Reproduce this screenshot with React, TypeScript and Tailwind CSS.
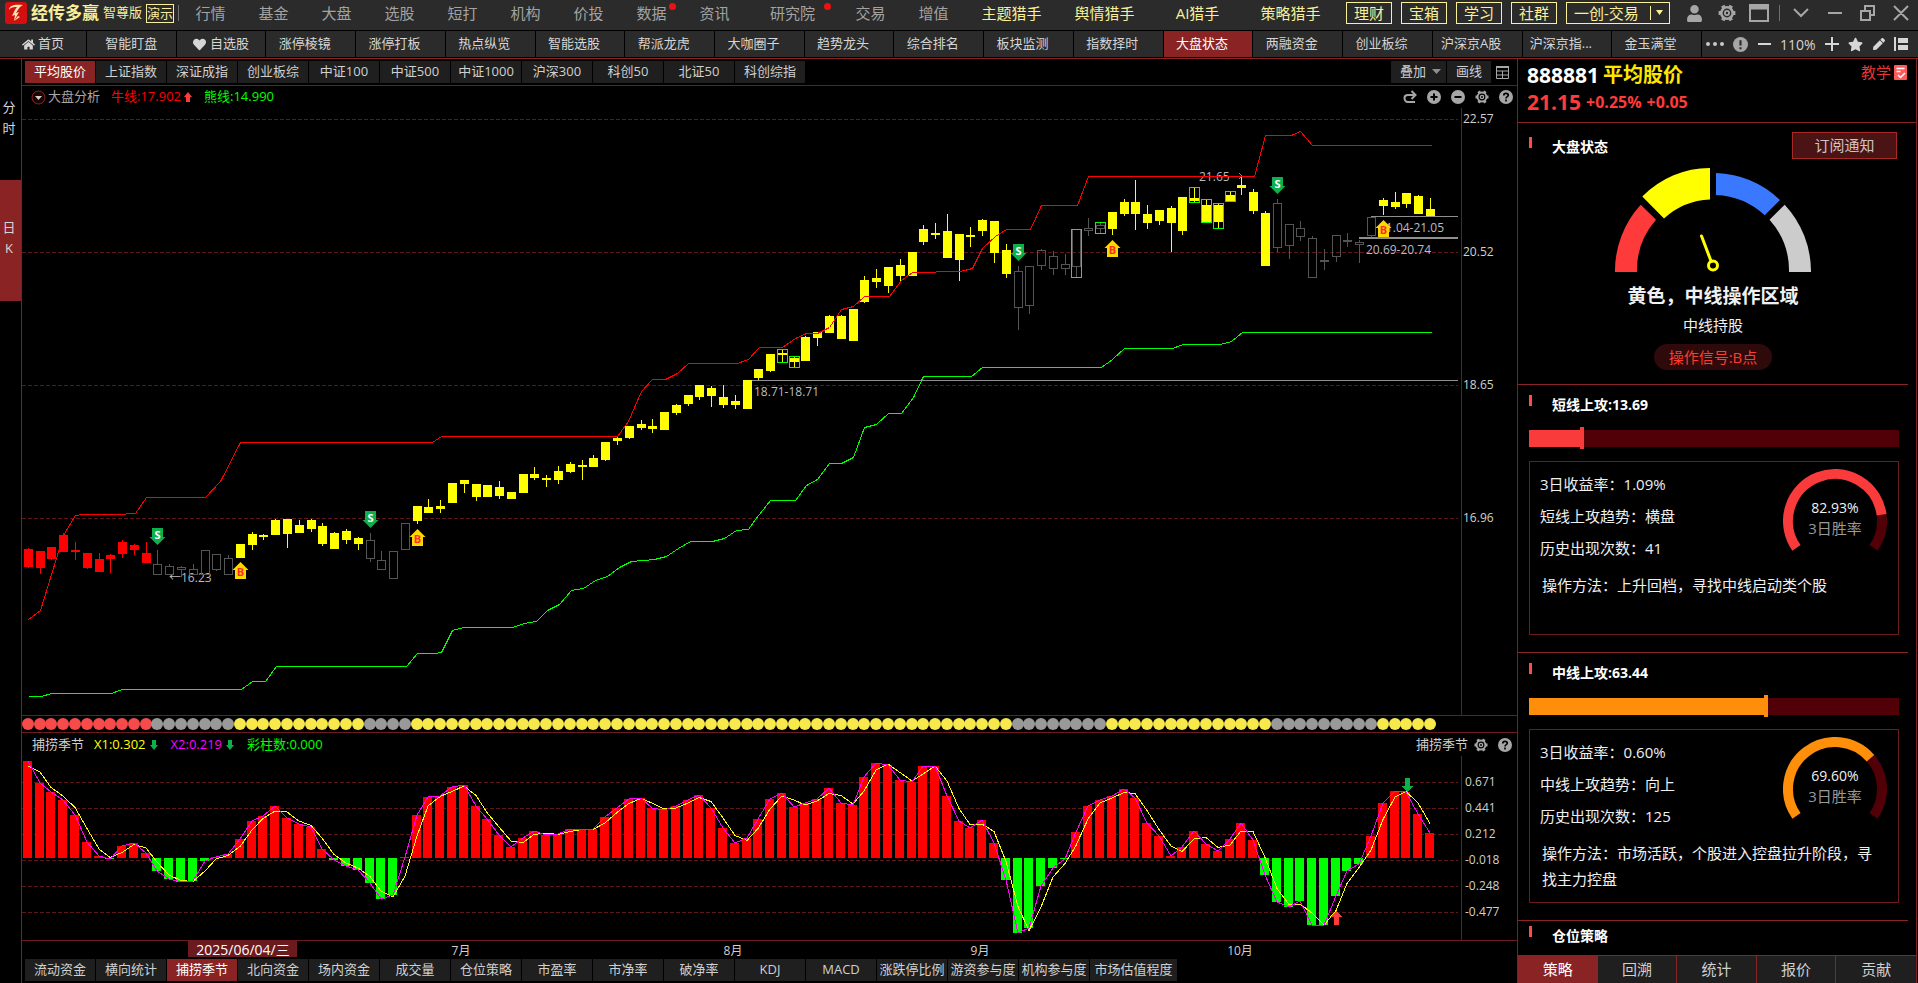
import type { ReactNode } from "react";
import { FaHeart, FaHome, FaPen, FaStar, FaUser } from "react-icons/fa";

type Tone = "red" | "gray" | "yellow";

const STEP = 11.782;
const FIRST_X = 28.35;
const ZERO_Y = 858;

// [high, body top, body bottom, low] for each trading day
const CANDLES: number[][] = [
  [548, 549, 567, 568], [551, 551, 568, 574], [547, 547, 559, 560], [533, 535, 552, 552],
  [542, 550, 552, 560], [553, 553, 568, 569], [553, 559, 572, 572], [554, 555, 559, 573],
  [540, 542, 554, 558], [544, 545, 550, 555], [542, 553, 563, 563], [550, 564, 575, 575],
  [564, 566, 575, 575], [566, 567, 570, 577], [564, 569, 575, 575], [550, 550, 575, 575],
  [554, 554, 570, 571], [555, 558, 575, 575], [544, 544, 558, 558], [532, 534, 545, 550],
  [534, 535, 537, 540], [519, 520, 535, 535], [519, 519, 534, 548], [520, 525, 533, 533],
  [519, 520, 529, 532], [523, 526, 544, 546], [532, 533, 549, 549], [529, 531, 540, 544],
  [537, 538, 544, 550], [533, 540, 559, 562], [551, 560, 570, 570], [551, 551, 579, 579],
  [523, 523, 550, 550], [506, 506, 521, 524], [499, 507, 513, 513], [500, 506, 509, 513],
  [483, 483, 503, 503], [480, 480, 484, 493], [484, 484, 497, 501], [485, 485, 497, 497],
  [481, 487, 496, 499], [492, 492, 499, 499], [474, 474, 493, 493], [467, 474, 478, 480],
  [475, 478, 480, 487], [466, 471, 480, 484], [462, 464, 472, 473], [460, 465, 467, 480],
  [455, 458, 467, 467], [442, 442, 460, 461], [436, 438, 441, 445], [426, 426, 438, 439],
  [420, 424, 428, 430], [419, 426, 429, 433], [412, 412, 430, 430], [404, 405, 413, 415],
  [395, 395, 404, 406], [385, 385, 397, 400], [386, 388, 396, 407], [385, 397, 405, 408],
  [395, 401, 405, 409], [380, 380, 409, 409], [369, 369, 378, 380], [354, 354, 371, 372],
  [350, 353, 355, 362], [356, 358, 362, 367], [336, 337, 361, 361], [332, 332, 338, 346],
  [315, 316, 333, 333], [315, 316, 339, 339], [309, 309, 341, 341], [276, 280, 302, 303],
  [269, 278, 282, 288], [267, 267, 286, 293], [259, 265, 276, 282], [252, 252, 276, 276],
  [225, 229, 242, 245], [223, 233, 235, 239], [214, 231, 258, 258], [234, 234, 260, 281],
  [227, 235, 237, 247], [219, 220, 231, 236], [221, 221, 253, 263], [244, 250, 274, 278],
  [266, 271, 308, 330], [266, 266, 306, 314], [249, 250, 266, 270], [251, 256, 269, 275],
  [254, 264, 269, 275], [229, 229, 267, 277], [218, 228, 231, 236], [222, 225, 229, 233],
  [212, 212, 229, 235], [199, 202, 214, 216], [180, 202, 214, 230], [205, 214, 223, 229],
  [210, 210, 221, 225], [206, 208, 223, 252], [197, 197, 231, 235], [187, 198, 201, 202],
  [199, 205, 222, 222], [203, 205, 222, 228], [191, 195, 201, 201], [177, 185, 188, 195],
  [189, 192, 211, 214], [211, 213, 266, 266], [199, 203, 248, 252], [224, 224, 246, 259],
  [221, 228, 237, 241], [236, 238, 278, 278], [249, 260, 262, 270], [235, 235, 257, 262],
  [233, 240, 242, 247], [240, 242, 245, 263], [217, 217, 236, 237], [198, 200, 206, 215],
  [192, 202, 207, 209], [193, 193, 204, 208], [195, 196, 214, 214], [198, 209, 216, 216],
];

const SEASON: number[] = [
  761, 783, 792, 800, 815, 842, 856, 859, 846, 843, 853, 871, 879, 882, 881, 861, 857, 854, 839, 821,
  816, 806, 818, 824, 827, 849, 860, 866, 870, 883, 899, 895, 857, 815, 797, 796, 787, 785, 806, 819,
  835, 847, 838, 831, 835, 834, 829, 830, 829, 817, 808, 799, 798, 808, 810, 806, 800, 795, 808, 828,
  843, 838, 819, 799, 793, 807, 803, 799, 788, 803, 805, 777, 763, 765, 780, 782, 766, 766, 796, 821,
  828, 820, 843, 880, 933, 928, 886, 868, 859, 832, 806, 800, 796, 789, 798, 823, 836, 856, 847, 831,
  844, 851, 839, 823, 840, 875, 902, 907, 901, 925, 925, 896, 871, 864, 836, 803, 791, 792, 814, 833,
];

const BULL_LINE =
  "28,619 40,610 63,535 75,515 82,514 117,514 135,513 146,497 205,497 220,481 240,442 432,442 441,436 617,436 628,421 641,391 652,379 665,379 677,373 688,363 737,363 748,359 759,347 782,347 795,338 806,333 817,333 829,327 841,309 853,306 864,296 889,296 901,280 912,272 960,271 972,268 982,248 995,236 1006,229 1030,229 1041,205 1077,205 1088,176 1254,176 1265,135 1291,135 1300,131 1312,145 1431,145";
const BEAR_LINE =
  "28,696 41,696 51,693 111,693 122,689 241,689 252,681 265,681 276,666 406,666 417,653 434,653 441,652 452,630 463,627 512,627 524,623 536,621 547,610 559,604 571,590 583,588 595,580 607,576 619,567 631,561 654,559 666,556 678,548 690,541 712,541 724,538 736,530 748,529 755,519 770,500 795,500 806,485 817,479 829,463 841,463 853,457 864,427 876,424 888,413 901,413 913,397 923,376 971,376 982,367 1101,367 1112,359 1124,348 1172,348 1183,344 1220,344 1231,341 1242,332 1431,332";

// day index, top, bottom
const GREEN_BOXES = [
  [64, 349, 362], [65, 356, 367], [89, 229, 277], [91, 222, 233],
  [99, 187, 202], [100, 199, 222], [101, 203, 228], [102, 191, 201],
];
const SELL_MARKS = [[11, 528], [29, 511], [84, 244], [106, 177]];
const BUY_MARKS = [[18, 562], [33, 529], [92, 240], [115, 220]];

const TOP_NAV = ["行情", "基金", "大盘", "选股", "短打", "机构", "价投", "数据", "资讯", "研究院", "交易", "增值"];
const HUNTERS = ["主题猎手", "舆情猎手", "AI猎手", "策略猎手"];
const SERVICES = ["理财", "宝箱", "学习", "社群"];
const PAGE_TABS = [
  "智能盯盘", "自选股", "涨停棱镜", "涨停打板", "热点纵览", "智能选股", "帮派龙虎", "大咖圈子", "趋势龙头",
  "综合排名", "板块监测", "指数择时", "大盘状态", "两融资金", "创业板综", "沪深京A股", "沪深京指...", "金玉满堂",
];
const INDEX_TABS = ["平均股价", "上证指数", "深证成指", "创业板综", "中证100", "中证500", "中证1000", "沪深300", "科创50", "北证50", "科创综指"];
const STUDY_TABS = [
  "流动资金", "横向统计", "捕捞季节", "北向资金", "场内资金", "成交量", "仓位策略", "市盈率", "市净率", "破净率",
  "KDJ", "MACD", "涨跌停比例", "游资参与度", "机构参与度", "市场估值程度",
];
const PANEL_TABS = ["策略", "回溯", "统计", "报价", "贡献"];

const DOT_FILL = { red: "#f74a4a", gray: "#999999", yellow: "#f7e84c" };

function dayX(i: number) {
  return Math.floor(FIRST_X + i * STEP);
}

function toneOf(i: number): Tone {
  if (i < 11) return "red";
  if (i < 18 || (i > 28 && i < 33) || (i > 83 && i < 92) || (i > 105 && i < 115)) return "gray";
  return "yellow";
}

function GearIcon({ size }: { size: number }) {
  return (
    <svg width={size} height={size} viewBox="0 0 20 20" fill="none" stroke="#a6a6a6">
      <circle cx="10" cy="10" r="6.3" strokeWidth="2.800" />
      <path
        strokeWidth="4.200"
        d="M16.500 10h2.800M3.500 10H.7M13.250 4.400l1.500-2.600M6.750 4.400l-1.500-2.600M13.250 15.600l1.500 2.600M6.750 15.600l-1.500 2.600"
      />
      <circle cx="10" cy="10" r="2.300" strokeWidth="2" />
    </svg>
  );
}

/** Round grey badge with a glyph cut out of it. */
function RoundIcon({ size, children }: { size: number; children: ReactNode }) {
  return (
    <svg width={size} height={size} viewBox="0 0 14 14" fill="none" stroke="#000" strokeWidth="2">
      <circle cx="7" cy="7" r="7" fill="#a6a6a6" stroke="none" />
      {children}
    </svg>
  );
}

function HelpIcon() {
  return (
    <RoundIcon size={14}>
      <path d="M4.8 5.4C4.8 4 5.8 3.4 7 3.4s2.3.7 2.3 1.9C9.300 6.500 7 6.800 7 8.400M7 9.600v1.800" strokeWidth="1.700" />
    </RoundIcon>
  );
}

function Arrow({ up, className }: { up?: boolean; className: string }) {
  return (
    <svg width="8" height="10" viewBox="0 0 8 10" className={className}>
      <path d={up ? "M4 0 8 5H6v5H2V5H0Z" : "M4 10 0 5h2V0h4v5h2Z"} />
    </svg>
  );
}

function TitleBar() {
  return (
    <header className="flex h-[30px] items-center pb-[4px] text-[15px] text-[#a3a3a3]">
      <div className="flex w-[179px] shrink-0 items-center text-[#f9ee9c]">
        <svg width="22" height="22" viewBox="0 0 22 22" className="ml-[5px] shrink-0">
          <rect width="22" height="22" rx="3" fill="#d40f0f" />
          <path d="M4 8C4 3 10 2 18 3c-4 2-5 5-7 8l3-1-5 9 1-6-3 1c2-4 3-7 5-9C9 5 6 5 4 8Z" fill="#fbe3b0" />
          <path d="m13 14-4 5 6-4Z" fill="#fbe3b0" />
        </svg>
        <h1 className="ml-[4px] text-[17px] font-bold whitespace-nowrap">经传多赢</h1>
        <span className="ml-[4px] text-[13px] whitespace-nowrap">智尊版</span>
        <span className="ml-[4px] border border-[#f9ee9c] text-[13px] leading-[17px] whitespace-nowrap">演示</span>
        <span className="ml-[4px] h-[16px] w-px bg-[#6f6f6f]" />
      </div>
      <nav className="flex shrink-0 items-center">
        {TOP_NAV.map((label) => (
          <a key={label} href="#" className={label === "研究院" ? "relative w-[93px] text-center" : "relative w-[63px] text-center"}>
            {label}
            {label === "数据" && <i className="absolute top-[1px] right-[7px] size-[7px] rounded-full bg-[#ee1111]" />}
            {label === "研究院" && <i className="absolute top-[1px] right-[8px] size-[7px] rounded-full bg-[#ee1111]" />}
          </a>
        ))}
        {HUNTERS.map((label) => (
          <a key={label} href="#" className="w-[93px] text-center text-[#f9f097]">
            {label}
          </a>
        ))}
      </nav>
      <div className="ml-auto flex shrink-0 items-center pr-[6px]">
        <div className="flex gap-[9px] text-[#f9f097]">
          {SERVICES.map((label) => (
            <button key={label} type="button" className="h-[22px] w-[46px] border border-[#f9f097] leading-[20px]">
              {label}
            </button>
          ))}
          <div className="relative h-[22px] w-[104px] border border-[#f9f097]">
            <select aria-label="交易通道" className="block h-[20px] w-full appearance-none bg-transparent pl-[7px] leading-[20px]">
              <option>一创-交易</option>
            </select>
            <span className="pointer-events-none absolute top-[3px] right-[18px] h-[14px] w-px bg-[#f9f097]" />
            <svg width="7" height="5" viewBox="0 0 7 5" className="pointer-events-none absolute top-[7px] right-[6px]">
              <path d="M0 0h7L3.5 5Z" fill="#f9f097" />
            </svg>
          </div>
        </div>
        <button type="button" aria-label="用户" className="ml-[16px]">
          <FaUser size={17} color="#a6a6a6" />
        </button>
        <button type="button" aria-label="设置" className="ml-[15px]">
          <GearIcon size={18} />
        </button>
        <button type="button" aria-label="窗口" className="ml-[13px]">
          <svg width="20" height="18" viewBox="0 0 20 18" fill="none" stroke="#a6a6a6">
            <path d="M1 1h18v16H1Z" strokeWidth="2" />
            <path d="M1 3.500h18" strokeWidth="4" />
          </svg>
        </button>
        <span className="ml-[10px] h-[16px] w-px bg-[#6f6f6f]" />
        <svg width="120" height="18" viewBox="0 0 120 18" fill="none" stroke="#a6a6a6" strokeWidth="2" className="ml-[12px]">
          <path d="m2 5 7 7 7-7M36 9h14M69 7h9v9h-9ZM73 7V2h9v9h-4M102 2l14 14M116 2l-14 14" />
        </svg>
      </div>
    </header>
  );
}

function PageTabs() {
  return (
    <nav className="flex h-[28px] border-y border-black bg-black text-[13px] text-[#d6d6d6]">
      <div className="flex min-w-0 flex-1 gap-px">
        <a href="#" className="flex w-[86px] shrink-0 items-center justify-center gap-[3px] bg-[#2b2b2b]">
          <FaHome size={13} />
          首页
        </a>
        {PAGE_TABS.map((label, i) => (
          <a
            key={label}
            href="#"
            className={
              label === "大盘状态"
                ? "flex grow basis-[80px] items-center justify-center bg-[#8a2424] pr-[12px] whitespace-nowrap text-white"
                : i < 2
                  ? "flex grow basis-[80px] items-center justify-center gap-[4px] bg-[#2b2b2b] whitespace-nowrap"
                  : "flex grow basis-[80px] items-center justify-center bg-[#2b2b2b] pr-[12px] whitespace-nowrap"
            }
          >
            {label === "自选股" && <FaHeart size={13} />}
            {label}
          </a>
        ))}
      </div>
      <div className="ml-px flex w-[216px] shrink-0 items-center justify-between bg-[#2b2b2b] pr-[10px] pl-[4px]">
        <svg width="18" height="4" viewBox="0 0 18 4" fill="#c8c8c8">
          <circle cx="2" cy="2" r="2" />
          <circle cx="9" cy="2" r="2" />
          <circle cx="16" cy="2" r="2" />
        </svg>
        <RoundIcon size={15}>
          <path d="M7 3v5M7 9.500v2" stroke="#2b2b2b" />
        </RoundIcon>
        <button type="button" aria-label="缩小" className="h-[2px] w-[13px] bg-[#d6d6d6]" />
        <span className="text-[14px]">110%</span>
        <button type="button" aria-label="放大">
          <svg width="14" height="14" viewBox="0 0 14 14" stroke="#d6d6d6" strokeWidth="2">
            <path d="M7 0v14M0 7h14" />
          </svg>
        </button>
        <FaStar size={15} />
        <FaPen size={12} />
        <svg width="14" height="14" viewBox="0 0 14 14" fill="#d6d6d6">
          <path d="M0 0h2v14H0ZM4 1h10v5H4ZM4 8h10v5H4Z" />
        </svg>
      </div>
    </nav>
  );
}

function PeriodRail() {
  return (
    <nav className="flex w-[22px] shrink-0 flex-col border-r border-[#7c1f22] text-center text-[13px] leading-[21px] text-[#d6d6d6]">
      <a href="#" className="h-[121px] pt-[38px] pr-[3px]">
        分<br />时
      </a>
      <a href="#" className="h-[121px] bg-[#8a2424] pt-[37px] pr-[3px]">
        日<br />K
      </a>
    </nav>
  );
}

function PriceChart() {
  return (
    <svg viewBox="22 108 1495 607" className="block h-auto w-full text-xs" shapeRendering="crispEdges">
      <g stroke="#5c171a" strokeDasharray="4 2">
        <path d="M22 119.500H1458M22 252.500H1458M22 385.500H1458M22 518.500H1458" />
      </g>
      <path d="M1461.500 108V715" stroke="#6b1a1d" />
      <g fill="#d0d0d0">
        <text x="1463" y="123">22.57</text>
        <text x="1463" y="256">20.52</text>
        <text x="1463" y="389">18.65</text>
        <text x="1463" y="522">16.96</text>
      </g>
      <g fill="#b9bcc4">
        <text x="169" y="582">←16.23</text>
        <text x="754" y="396">18.71-18.71</text>
        <text x="1199" y="181">21.65</text>
        <text x="1379" y="232">21.04-21.05</text>
        <text x="1366" y="254">20.69-20.74</text>
      </g>
      <g stroke="#8f8f8f">
        <path d="M749 380.500H1458M1371 216.500H1458" />
        <path d="M1359 238H1458" strokeWidth="2" />
        <path d="m1239 173 3 3-3 3" fill="none" />
      </g>
      {CANDLES.map(([high, top, bottom, low], i) => {
        const x = dayX(i);
        const tone = toneOf(i);
        if (tone === "gray") {
          return (
            <g key={i} stroke="#555" fill="none">
              <path d={`M${x + 0.5} ${high}V${top}M${x + 0.5} ${bottom}V${low}`} />
              <rect x={x - 3.5} y={top + 0.5} width={8} height={Math.max(bottom - top - 1, 1)} />
            </g>
          );
        }
        return (
          <g key={i} fill={tone === "red" ? "#ff0000" : "#ffff00"}>
            <rect x={x} y={high} width={1} height={low - high} />
            <rect x={x - 4} y={top} width={9} height={bottom - top} />
          </g>
        );
      })}
      {GREEN_BOXES.map(([i, top, bottom]) => (
        <rect key={i} x={dayX(i) - 4.5} y={top + 0.5} width={10} height={bottom - top} fill="none" stroke="#00ff00" />
      ))}
      <polyline points={BULL_LINE} fill="none" stroke="#ff0000" transform="translate(.5 .5)" />
      <polyline points={BEAR_LINE} fill="none" stroke="#00ff00" transform="translate(.5 .5)" />
      <g textAnchor="middle" shapeRendering="auto" className="text-[11px] font-bold">
        {SELL_MARKS.map(([i, y]) => (
          <g key={i}>
            <path d={`M${dayX(i) - 5} ${y}h11v9h2.500l-8 8-8-8h2.500Z`} fill="#0db14b" />
            <text x={dayX(i) + 0.5} y={y + 11} fill="#fff">S</text>
          </g>
        ))}
        {BUY_MARKS.map(([i, y]) => (
          <g key={i}>
            <path d={`M${dayX(i) + 0.5} ${y}l8 8h-2.500v9h-11v-9h-2.500Z`} fill="#ffd800" />
            <text x={dayX(i) + 0.5} y={y + 14} fill="#ff2a2a">B</text>
          </g>
        ))}
      </g>
    </svg>
  );
}

/** One coloured dot per trading day, showing the market state. */
function StateDots() {
  return (
    <svg viewBox="22 716 1495 16" className="block h-auto w-full">
      {CANDLES.map((_, i) => (
        <circle key={i} cx={dayX(i)} cy="724" r="6" fill={DOT_FILL[toneOf(i)]} />
      ))}
    </svg>
  );
}

function SeasonChart() {
  const fast = SEASON.map((y, i) => `${dayX(i)},${y}`).join(" ");
  const slow = SEASON.map((y, i) => `${dayX(i)},${i ? (y + SEASON[i - 1]) / 2 : y + 5}`).join(" ");
  return (
    <svg viewBox="22 756 1495 203" className="block h-auto w-full text-xs" shapeRendering="crispEdges">
      <g stroke="#5c171a" strokeDasharray="4 2">
        <path d="M22 782.500H1458M22 808.500H1458M22 834.500H1458M22 860.500H1458M22 886.500H1458M22 912.500H1458" />
      </g>
      <path d="M1461.500 756V940M22 940.500H1517" stroke="#6b1a1d" />
      {SEASON.map((y, i) => (
        <rect
          key={i}
          x={dayX(i) - 5}
          y={Math.min(y, ZERO_Y)}
          width={9}
          height={Math.max(Math.abs(y - ZERO_Y), 1)}
          fill={y < ZERO_Y ? "#ff0000" : "#00ff00"}
        />
      ))}
      <polyline points={slow} fill="none" stroke="#ffff00" />
      <polyline points={fast} fill="none" stroke="#ff00ff" />
      <path d="M1405 778h5v8h3l-5.500 6-5.500-6h3Z" fill="#0db14b" />
      <path d="M1336.500 911l5.500 6h-3v8h-5v-8h-3Z" fill="#ff3a3a" />
      <g fill="#d0d0d0">
        <text x="1465" y="786">0.671</text>
        <text x="1465" y="812">0.441</text>
        <text x="1465" y="838">0.212</text>
        <text x="1465" y="864">-0.018</text>
        <text x="1465" y="890">-0.248</text>
        <text x="1465" y="916">-0.477</text>
      </g>
      <rect x="188" y="941" width="109" height="16" fill="#6b1a1d" />
      <g textAnchor="middle" fill="#d0d0d0">
        <text x="243" y="955" fill="#fff" className="text-[14px]">2025/06/04/三</text>
        <text x="461" y="955">7月</text>
        <text x="733" y="955">8月</text>
        <text x="980" y="955">9月</text>
        <text x="1240" y="955">10月</text>
      </g>
    </svg>
  );
}

function ChartTab({ label, active }: { label: string; active: boolean }) {
  return (
    <button
      type="button"
      className={
        active
          ? "h-[22px] w-[70px] shrink-0 bg-[#8a2424] whitespace-nowrap text-white"
          : label.length > 5 && label.endsWith("程度")
            ? "h-[22px] w-[87px] shrink-0 bg-[#1f1f1f] whitespace-nowrap"
            : "h-[22px] w-[70px] shrink-0 bg-[#1f1f1f] whitespace-nowrap"
      }
    >
      {label}
    </button>
  );
}

function ChartArea() {
  return (
    <main className="min-w-0 flex-1 text-[13px] text-[#d0d0d0]">
      <div className="flex h-[27px] items-center gap-px border-b border-[#6b1a1d] pl-[3px]">
        {INDEX_TABS.map((label) => (
          <ChartTab key={label} label={label} active={label === "平均股价"} />
        ))}
        <div className="relative ml-auto h-[22px] w-[55px] bg-[#1f1f1f]">
          <select aria-label="叠加" className="block h-[22px] w-full appearance-none bg-transparent pl-[9px]">
            <option>叠加</option>
          </select>
          <svg width="9" height="5" viewBox="0 0 9 5" className="pointer-events-none absolute top-[8px] right-[5px]">
            <path d="M0 0h9L4.500 5Z" fill="#8f8f8f" />
          </svg>
        </div>
        <button type="button" className="h-[22px] w-[44px] bg-[#1f1f1f]">画线</button>
        <button type="button" aria-label="布局" className="mr-[8px] ml-[4px]">
          <svg width="13" height="13" viewBox="0 0 13 13" fill="none" stroke="#a6a6a6">
            <path d="M.5 1.500h12v11H.5ZM.5 5h12M.5 9h12M6.500 5v7.500" />
            <path d="M0 1h13" strokeWidth="2" />
          </svg>
        </button>
      </div>

      <div className="flex h-[22px] items-center pr-[4px] pl-[9px]">
        <svg width="15" height="15" viewBox="0 0 15 15">
          <circle cx="7.5" cy="7.5" r="6.500" fill="#1a0505" stroke="#8a2424" />
          <path d="M4 6h7l-3.500 4Z" fill="#d0d0d0" />
        </svg>
        <span className="ml-[2px] text-[#a6a6a6]">大盘分析</span>
        <span className="ml-[11px] text-[#ff0000]">牛线:17.902</span>
        <Arrow up className="ml-[3px] fill-[#ff3a3a]" />
        <span className="ml-[12px] text-[#00ff00]">熊线:14.990</span>
        <div className="ml-auto flex items-center gap-[10px]">
          <svg width="14" height="14" viewBox="0 0 14 14" fill="none" stroke="#a6a6a6" strokeWidth="2">
            <path d="M11 5H5C2.500 5 1.500 6.500 1.500 8S2.500 12 5 12h7M8.500 1 12.500 5l-4 4" />
          </svg>
          <RoundIcon size={14}>
            <path d="M7 3.500v7M3.500 7h7" />
          </RoundIcon>
          <RoundIcon size={14}>
            <path d="M3.500 7h7" />
          </RoundIcon>
          <GearIcon size={14} />
          <HelpIcon />
        </div>
      </div>
      <PriceChart />
      <div className="border-y border-[#6b1a1d]">
        <StateDots />
      </div>

      <div className="flex h-[23px] items-center pr-[5px] pl-[10px]">
        <span>捕捞季节</span>
        <span className="ml-[10px] text-[#ffff00]">X1:0.302</span>
        <Arrow className="ml-[4px] fill-[#0db14b]" />
        <span className="ml-[13px] text-[#ff00ff]">X2:0.219</span>
        <Arrow className="ml-[4px] fill-[#0db14b]" />
        <span className="ml-[13px] text-[#00ff00]">彩柱数:0.000</span>
        <span className="mr-[6px] ml-auto">捕捞季节</span>
        <GearIcon size={14} />
        <span className="ml-[10px]">
          <HelpIcon />
        </span>
      </div>
      <SeasonChart />
      <div className="flex h-[24px] gap-px pl-[3px]">
        {STUDY_TABS.map((label) => (
          <ChartTab key={label} label={label} active={label === "捕捞季节"} />
        ))}
      </div>
    </main>
  );
}

function SectionTitle({ children }: { children: ReactNode }) {
  return (
    <div className="flex h-[20px]">
      <span className="h-[11px] w-[3px] bg-[#ff4b4b]" />
      <h2 className="ml-[20px] text-[14px] leading-[19px] font-bold text-white">{children}</h2>
    </div>
  );
}

function StateGauge() {
  return (
    <svg width="196" height="104" viewBox="1615 168 196 104" className="mx-auto block">
      <path d="M1615 272A98 98 0 0 1 1640.700 204.700L1656 219.700A76 76 0 0 0 1637 272Z" fill="#ff3a3a" />
      <path d="M1642.300 196.500A98 104 0 0 1 1710 168V199.500A72 72 0 0 0 1664 218.500Z" fill="#ffff00" />
      <path d="M1716 173A98 98 0 0 1 1780 200L1764.700 215.300A76 76 0 0 0 1716 195Z" fill="#3a78ff" />
      <path d="M1784.700 204.700A98 98 0 0 1 1811 272H1789A76 76 0 0 0 1769.500 219.700Z" fill="#cccccc" />
      <circle cx="1713" cy="265.500" r="4.500" fill="none" stroke="#ffff00" strokeWidth="3" />
      <path d="M1701.500 236l9.700 25.500" stroke="#ffff00" strokeWidth="3" strokeLinecap="round" />
    </svg>
  );
}

interface AttackProps {
  title: string;
  score: number;
  color: string;
  winRate: number;
  stats: string[][];
  advice: string;
}

/** Win-rate ring, open at the bottom over 110 degrees. */
function WinRing({ rate, color }: { rate: number; color: string }) {
  const point = (deg: number) => {
    const rad = (deg * Math.PI) / 180;
    return `${52 + 47 * Math.cos(rad)} ${52 + 47 * Math.sin(rad)}`;
  };
  const split = 145 + (250 * rate) / 100;
  return (
    <svg width="104" height="84" viewBox="0 0 104 84" fill="none" strokeWidth="10">
      <path d={`M${point(split)}A47 47 0 0 1 ${point(395)}`} stroke="#520007" />
      <path d={`M${point(145)}A47 47 0 ${split > 325 ? 1 : 0} 1 ${point(split)}`} stroke={color} />
      <text x="52" y="44" textAnchor="middle" fill="#f0f0f0" className="text-[14px]">
        {rate.toFixed(2)}%
      </text>
      <text x="52" y="65" textAnchor="middle" fill="#999" className="text-[15px]">
        3日胜率
      </text>
    </svg>
  );
}

function AttackSection({ title, score, color, winRate, stats, advice }: AttackProps) {
  return (
    <section className="h-[268px] border-t border-[#8a2424] pt-[10px] pr-[9px] pl-[11px]">
      <SectionTitle>
        {title}:{score}
      </SectionTitle>
      <div
        role="progressbar"
        aria-label={title}
        aria-valuenow={score}
        className="mt-[12px] flex h-[22px] items-center bg-[linear-gradient(#520007,#520007)] bg-[length:100%_17px] bg-center bg-no-repeat"
      >
        <div className="h-[17px]" style={{ width: `${score}%`, background: color }} />
        <div className="h-[22px] w-[4px]" style={{ background: color }} />
      </div>
      <div className="relative mt-[12px] h-[174px] border border-[#6b1a1d] pt-[6px] pr-[14px] pl-[10px] text-[15px] text-[#f0f0f0]">
        <dl className="leading-[32px]">
          {stats.map(([name, value]) => (
            <div key={name} className="flex">
              <dt>{name}：</dt>
              <dd>{value}</dd>
            </div>
          ))}
        </dl>
        <p className="mt-[8px] pl-[2px] leading-[26px]">{advice}</p>
        <div className="absolute top-[7px] right-[11px]">
          <WinRing rate={winRate} color={color} />
        </div>
      </div>
    </section>
  );
}

function StrategyPanel() {
  return (
    <aside className="mr-px flex w-[400px] shrink-0 flex-col border-x border-[#7c1f22]">
      <div className="flex h-[63px] justify-between pt-[4px] pr-[9px] pl-[9px]">
        <div className="font-bold">
          <p className="flex items-center gap-[4px] text-[20px] leading-[24px] text-[#ffe600]">
            <span className="text-[21px] text-white">888881</span>
            <span>平均股价</span>
          </p>
          <p className="flex items-center gap-[5px] text-[16px] leading-[30px] text-[#ff3a3a]">
            <span className="text-[21px]">21.15</span>
            <span>+0.25%</span>
            <span>+0.05</span>
          </p>
        </div>
        <a href="#" className="flex h-[18px] items-center gap-[3px] text-[15px] text-[#ee3333]">
          教学
          <svg width="13" height="15" viewBox="0 0 13 15">
            <rect width="13" height="15" rx="1" fill="#ff5a5a" />
            <path d="M2.500 3.500h8M2.500 6.500h4M4 10l2.500 2.500L11 8" stroke="#fff" strokeWidth="1.500" fill="none" />
          </svg>
        </a>
      </div>

      <section className="h-[262px] border-t border-[#8a2424] pt-[9px] pl-[11px]">
        <div className="flex h-[27px] justify-between pr-[19px]">
          <div className="pt-[5px]">
            <SectionTitle>大盘状态</SectionTitle>
          </div>
          <button type="button" className="h-[27px] w-[105px] border border-[#a82828] bg-[#4a1414] text-[15px] text-[#d0c4c4]">
            订阅通知
          </button>
        </div>
        <div className="mt-[9px] pr-[19px] text-center text-[15px] text-[#f0f0f0]">
          <StateGauge />
          <p className="mt-[10px] text-[19px] leading-[28px] font-bold">黄色，中线操作区域</p>
          <p className="mt-[4px] leading-[22px]">中线持股</p>
          <p className="mx-auto mt-[8px] w-[118px] rounded-full bg-[#2e0a0a] leading-[26px] text-[#ff3a30]">操作信号:B点</p>
        </div>
      </section>

      <div className="pr-[8px]">
        <AttackSection
          title="短线上攻"
          score={13.69}
          color="#fa3b3b"
          winRate={82.93}
          stats={[["3日收益率", "1.09%"], ["短线上攻趋势", "横盘"], ["历史出现次数", "41"]]}
          advice="操作方法：上升回档，寻找中线启动类个股"
        />
        <AttackSection
          title="中线上攻"
          score={63.44}
          color="#ff8f0a"
          winRate={69.6}
          stats={[["3日收益率", "0.60%"], ["中线上攻趋势", "向上"], ["历史出现次数", "125"]]}
          advice="操作方法：市场活跃，个股进入控盘拉升阶段，寻找主力控盘"
        />
        <section className="h-[35px] border-t border-[#8a2424] pt-[5px] pl-[11px]">
          <SectionTitle>仓位策略</SectionTitle>
        </section>
      </div>

      <nav className="mt-auto grid h-[28px] grid-cols-5 border-t border-[#8a2424] text-[15px] text-[#d0d0d0]">
        {PANEL_TABS.map((label) => (
          <button
            key={label}
            type="button"
            className={label === "策略" ? "bg-[#8a2424] text-white" : "border-r border-[#8a2424] bg-[#1f1f1f] last:border-r-0"}
          >
            {label}
          </button>
        ))}
      </nav>
    </aside>
  );
}

export default function App() {
  return (
    <div className="min-h-screen overflow-x-hidden bg-[#2b2b2b] font-['Open_Sans','Noto_Sans_CJK_SC',sans-serif]">
      <TitleBar />
      <PageTabs />
      <div className="flex border-t border-[#8a2424] bg-black">
        <PeriodRail />
        <ChartArea />
        <StrategyPanel />
      </div>
    </div>
  );
}
